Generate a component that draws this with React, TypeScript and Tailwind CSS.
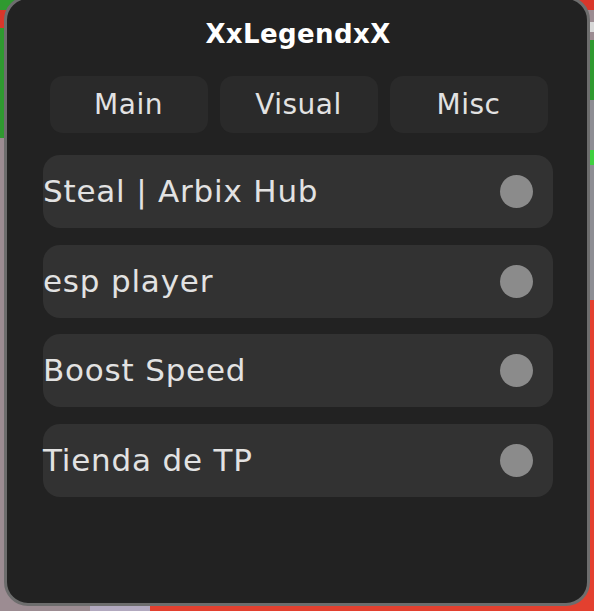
import React from "react";

const rows = ["Steal | Arbix Hub", "esp player", "Boost Speed", "Tienda de TP"];
const tabs = ["Main", "Visual", "Misc"];

function Scene() {
  return (
    <svg className="absolute inset-0" width="594" height="611" viewBox="0 0 594 611">
      <rect x="0" y="0" width="594" height="611" fill="#9c8c92" />
      <rect x="0" y="0" width="40" height="138" fill="#2f9a30" />
      <rect x="0" y="10" width="12" height="18" fill="#d9362a" />
      <rect x="554" y="0" width="40" height="10" fill="#d9362a" />
      <rect x="588" y="22" width="6" height="10" fill="#d8d8d8" />
      <rect x="588" y="40" width="6" height="60" fill="#2f9a30" />
      <rect x="588" y="100" width="6" height="200" fill="#8d8d93" />
      <rect x="590" y="150" width="4" height="15" fill="#3fd040" />
      <rect x="564" y="300" width="30" height="311" fill="#e3402f" />
      <rect x="90" y="603" width="60" height="8" fill="#b2a9bf" />
      <rect x="150" y="603" width="444" height="8" fill="#e3402f" />
    </svg>
  );
}

function Toggle({ label }: { label: string }) {
  return (
    <div className="w-[510px] h-[73px] rounded-[17px] bg-[#323232] flex items-center justify-between pr-[20px]">
      <span className="text-[31px] tracking-[0.8px] text-[#e2e2e2] leading-none">{label}</span>
      <span className="w-[33px] h-[33px] rounded-full bg-[#8b8b8b]" />
    </div>
  );
}

export default function App() {
  return (
    <div
      className="relative w-[594px] h-[611px] overflow-hidden"
      style={{ fontFamily: '"DejaVu Sans", "Liberation Sans", sans-serif' }}
    >
      <Scene />
      <div className="relative ml-[4px] mt-[-4px] w-[586px] h-[610px] rounded-[24px] border-[3px] border-[#6d6d6d] bg-[#222222] flex flex-col items-center">
        <div className="mt-[20px] h-[30px] leading-[30px] text-[26px] tracking-[0.4px] font-bold text-white ml-[2px]">
          XxLegendxX
        </div>
        <div className="mt-[27px] flex gap-[12px] ml-[3px]">
          {tabs.map((t) => (
            <div
              key={t}
              className="w-[158px] h-[57px] rounded-[13px] bg-[#2a2a2a] flex items-center justify-center text-[28px] tracking-[0.5px] text-[#e2e2e2]"
            >
              {t}
            </div>
          ))}
        </div>
        <div className="mt-[22px] flex flex-col gap-[16.7px] ml-[2px]">
          {rows.map((r) => (
            <Toggle key={r} label={r} />
          ))}
        </div>
      </div>
    </div>
  );
}
